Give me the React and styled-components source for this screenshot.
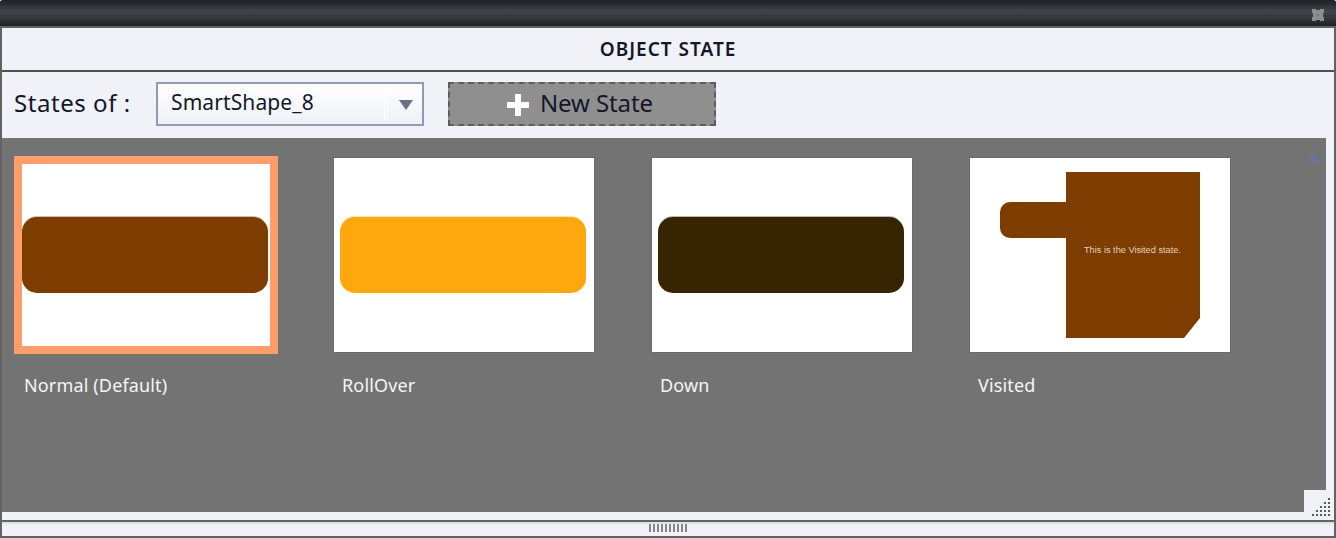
import React from "react";
import styled, { createGlobalStyle } from "styled-components";

const Global = createGlobalStyle`
  html, body { margin: 0; padding: 0; background: #fff; }
  #root { width: 1336px; height: 538px; overflow: hidden; }
`;

const Frame = styled.div`
  position: relative;
  box-sizing: border-box;
  width: 1336px;
  height: 538px;
  display: flex;
  flex-direction: column;
  background: #f0f2f7;
  border-left: 2px solid #626262;
  border-right: 2px solid #626262;
  border-bottom: 2px solid #626262;
  border-radius: 3px 3px 0 0;
  font-family: "Noto Sans", "DejaVu Sans", sans-serif;
`;

const TitleBar = styled.div`
  flex: none;
  box-sizing: content-box;
  height: 22px;
  margin: 0 -2px;
  border-radius: 3px 3px 0 0;
  background: linear-gradient(#202228 0, #25272d 3px, #42454c 11px, #33363b 18px, #1d1f23 26px);
  border-bottom: 2px solid #626262;
  display: flex;
  align-items: center;
  justify-content: flex-end;
  padding: 4px 12px 0 0;
`;

const Heading = styled.div`
  flex: none;
  box-sizing: border-box;
  height: 44px;
  padding-bottom: 1px;
  border-bottom: 2px solid #4f4f4f;
  display: flex;
  align-items: center;
  justify-content: center;
  font-size: 19px;
  font-weight: 600;
  color: #14172a;
  letter-spacing: 1px;
`;

const Toolbar = styled.div`
  flex: none;
  height: 66px;
  box-sizing: border-box;
  padding: 10px 0 12px 12px;
  display: flex;
  align-items: stretch;
`;

const ToolLabel = styled.div`
  width: 142px;
  display: flex;
  align-items: center;
  font-size: 24px;
  color: #14172a;
  letter-spacing: 0.55px;
  padding-bottom: 4px;
  box-sizing: border-box;
`;

const Select = styled.div`
  width: 268px;
  box-sizing: border-box;
  border: 2px solid #9299b0;
  background: linear-gradient(#ffffff, #eff1f7);
  display: flex;
  align-items: center;
  padding: 0 9px 0 13px;
  font-size: 21px;
  color: #14172a;
  letter-spacing: 0.1px;
`;

const SelectValue = styled.span`
  flex: 1;
  padding-bottom: 4px;
`;

const SelectSeam = styled.span`
  align-self: stretch;
  width: 2px;
  margin: 2px 11px 4px 0;
  border-left: 1px solid #fff;
  border-right: 1px solid #fff;
`;

const Caret = styled.svg`
  margin-top: 2px;
`;

const NewState = styled.div`
  width: 268px;
  margin-left: 24px;
  box-sizing: border-box;
  border: 2px dashed #5e5e5e;
  background: #8f8f8f;
  display: flex;
  align-items: center;
  justify-content: center;
  gap: 11px;
  font-size: 24px;
  color: #14172a;
  letter-spacing: -0.1px;
  padding: 0 4px 3px 0;
`;

const PlusIcon = styled.svg`
  margin-top: 5px;
`;

const Stage = styled.div`
  flex: none;
  position: relative;
  height: 374px;
  margin-right: 8px;
  background: #737373;
  display: grid;
  grid-template-columns: repeat(4, 264px);
  column-gap: 54px;
  padding: 18px 0 0 12px;
  box-sizing: border-box;
  align-content: start;
`;

const Item = styled.div`
  display: flex;
  flex-direction: column;
`;

const Thumb = styled.div`
  position: relative;
  box-sizing: border-box;
  background: #fff;
  overflow: hidden;
  display: flex;
  align-items: center;
  ${(p) =>
    p.$selected
      ? "border: 8px solid #ff9d6c; width: 264px; height: 198px;"
      : "border: 1px solid #656a78; width: 262px; height: 196px; margin: 1px 0 0 1px; padding: 0 8px 0 6px;"}
`;

const Pill = styled.div`
  flex: none;
  width: 246px;
  height: 76px;
  border-radius: 15px;
  background: ${(p) => p.$color};
  box-shadow: 0 -1px 0 ${(p) => p.$color}55;
`;

const Caption = styled.div`
  margin: ${(p) => (p.$selected ? "20px" : "21px")} 0 0 10px;
  font-size: 18px;
  line-height: 22px;
  letter-spacing: 0.15px;
  color: #f2f5fa;
`;

const VisitedArt = styled.svg`
  position: absolute;
  left: 0;
  top: 0;
`;

const VisitedNote = styled.text`
  font-family: "Liberation Sans", sans-serif;
  font-size: 9.2px;
  fill: #e3d2bf;
`;

const ScrollArrow = styled.svg`
  position: absolute;
  right: 4px;
  top: 16px;
`;

const Gap = styled.div`
  flex: none;
  height: 8px;
`;

const Divider = styled.div`
  flex: none;
  height: 2px;
  background: #626262;
`;

const Footer = styled.div`
  flex: 1;
  border-top: 2px solid #e0e1e4;
  display: flex;
  justify-content: center;
  gap: 2px;
  box-sizing: border-box;
`;

const Bar = styled.span`
  width: 2px;
  height: 8px;
  background: #848484;
`;

const Grip = styled.div`
  position: absolute;
  right: 0;
  top: 490px;
  width: 30px;
  height: 30px;
  background: #f0f2f7;
`;

const GripSvg = styled.svg`
  position: absolute;
  right: 4px;
  top: 8px;
`;

const CloseIcon = () => (
  <svg width="12" height="12" viewBox="0 0 12 12">
    <path d="M0 0h4v1h4V0h4v4h-1v4h1v4H8v-1H4v1H0V8h1V4H0z" fill="#8d8d8d" />
    <path d="M5 5h2v2H5z" fill="#7a7a7a" />
  </svg>
);

const Plus = () => (
  <PlusIcon width="22" height="22" viewBox="0 0 22 22">
    <path d="M8 0h6v8h8v6h-8v8H8v-8H0V8h8z" fill="#fff" />
  </PlusIcon>
);

const gripDots = [];
for (let row = 0; row < 5; row++) {
  for (let col = 4 - row; col < 5; col++) {
    gripDots.push([col * 4, row * 4]);
  }
}

const states = [
  { name: "Normal (Default)", color: "#7d3c00", selected: true },
  { name: "RollOver", color: "#ffa70f" },
  { name: "Down", color: "#372400" },
];

export default function App() {
  return (
    <>
      <Global />
      <Frame>
        <TitleBar>
          <CloseIcon />
        </TitleBar>
        <Heading>OBJECT STATE</Heading>
        <Toolbar>
          <ToolLabel>States of :</ToolLabel>
          <Select>
            <SelectValue>SmartShape_8</SelectValue>
            <SelectSeam />
            <Caret width="14" height="10" viewBox="0 0 14 10">
              <path d="M0 0h14L7 10z" fill="#6b7088" />
            </Caret>
          </Select>
          <NewState>
            <Plus />
            <span>New State</span>
          </NewState>
        </Toolbar>
        <Stage>
          {states.map((s) => (
            <Item key={s.name}>
              <Thumb $selected={s.selected}>
                <Pill $color={s.color} />
              </Thumb>
              <Caption $selected={s.selected}>{s.name}</Caption>
            </Item>
          ))}
          <Item>
            <Thumb>
              <VisitedArt width="260" height="194" viewBox="0 0 260 194">
                <path
                  d="M96 14h134v146l-16 20H96v-100H40a10 10 0 0 1-10-10V54a10 10 0 0 1 10-10h56z"
                  fill="#7d3c00"
                />
                <VisitedNote x="114" y="95">This is the Visited state.</VisitedNote>
              </VisitedArt>
            </Thumb>
            <Caption>Visited</Caption>
          </Item>
          <ScrollArrow width="16" height="8" viewBox="0 0 16 8">
            <path d="M8 0l8 8H0z" fill="#6a749a" />
          </ScrollArrow>
        </Stage>
        <Gap />
        <Divider />
        <Footer>
          {Array.from({ length: 10 }, (_, i) => (
            <Bar key={i} />
          ))}
        </Footer>
        <Grip>
          <GripSvg width="18" height="18" viewBox="0 0 18 18">
            {gripDots.map(([x, y]) => (
              <rect key={`${x}-${y}`} x={x} y={y} width="2" height="2" fill="#5c5c5c" />
            ))}
          </GripSvg>
        </Grip>
      </Frame>
    </>
  );
}
